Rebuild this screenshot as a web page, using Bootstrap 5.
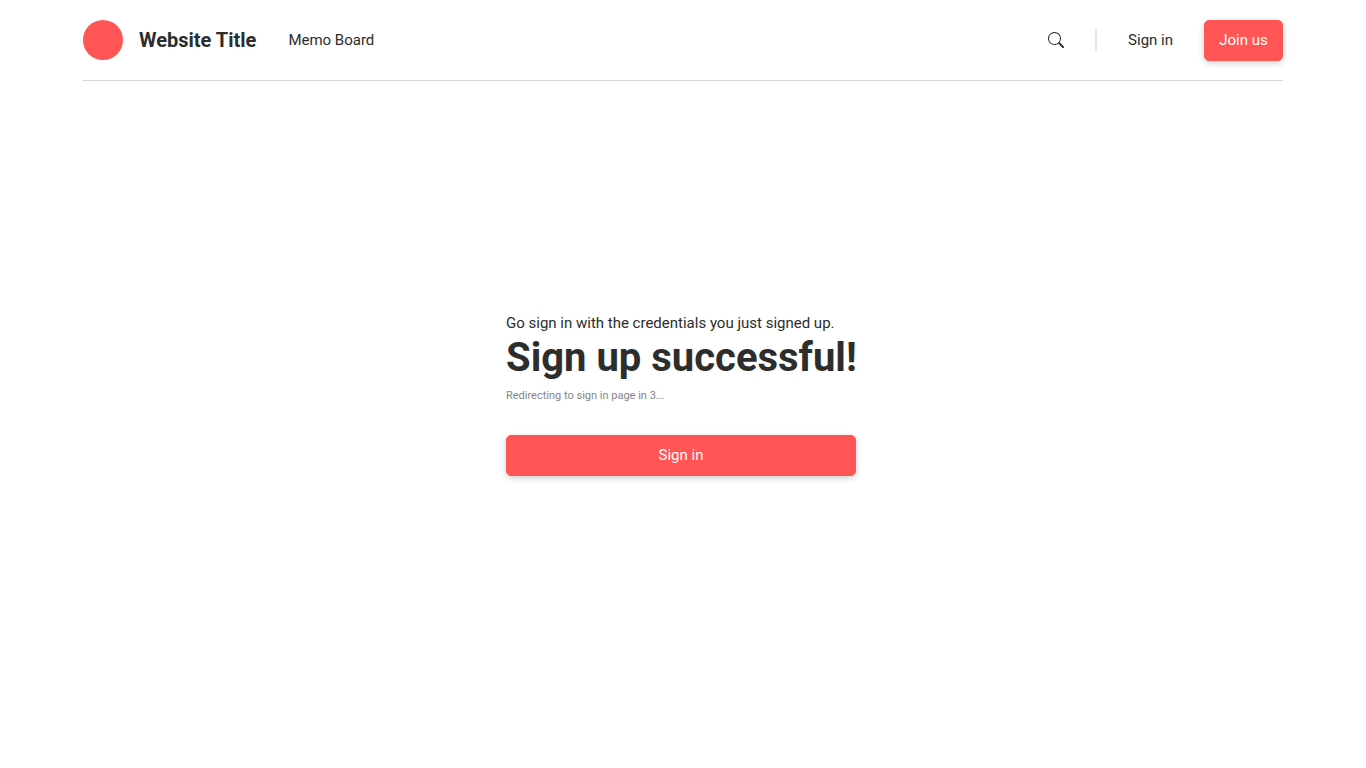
<!DOCTYPE html>
<html lang="en">
<head>
<meta charset="utf-8">
<meta name="viewport" content="width=device-width, initial-scale=1">
<title>Sign up successful</title>
<link href="https://cdn.jsdelivr.net/npm/bootstrap@5.3.0/dist/css/bootstrap.min.css" rel="stylesheet">
<style>
body{font-family:Roboto,"Liberation Sans",sans-serif;font-size:15px;line-height:24px;color:#2d2d2d;background:#fff}
.site-wrap{max-width:1200px}
.site-header{height:81px;border-bottom:1px solid #d6d6d6}
.site-logo{width:40px;height:40px;background:#ff5555}
.site-name{font-size:20px;font-weight:700}
.site-header a{color:#2d2d2d}
.site-nav{gap:31px}
.divider-bar{width:2px;height:24px;background:#e8e8e8}
.btn-coral{--bs-btn-font-size:15px;--bs-btn-color:#fff;--bs-btn-bg:#ff5555;--bs-btn-border-color:#ff5555;--bs-btn-hover-color:#fff;--bs-btn-hover-bg:#ee4848;--bs-btn-hover-border-color:#ee4848;height:41px;border-radius:5px;padding:0 14px;box-shadow:0 2px 6px rgba(0,0,0,.2)}
.btn-join{width:79px}
.headline{font-size:40px;font-weight:700;line-height:46px}
.redirect-note{font-size:11px;line-height:16px;color:#858585;margin:7px 0 31px}
.message-area{padding-bottom:63px}
.message-panel{width:354px;max-width:100%}
.message-action{width:350px;max-width:100%}
</style>
</head>
<body class="d-flex flex-column min-vh-100">
<div class="container-fluid site-wrap px-0">
<header class="site-header d-flex align-items-center">
<a href="#" class="d-flex align-items-center text-decoration-none"><span class="site-logo rounded-circle me-3"></span><span class="site-name">Website Title</span></a>
<a href="#" class="text-decoration-none ms-4 ps-2">Memo Board</a>
<nav class="site-nav d-flex align-items-center ms-auto">
<a href="#" class="d-flex" aria-label="Search"><svg width="16" height="16" fill="currentColor" viewBox="0 0 16 16"><path d="M11.742 10.344a6.500 6.500 0 1 0-1.397 1.398h-.001c.03.040.062.078.098.115l3.850 3.850a1 1 0 0 0 1.415-1.414l-3.850-3.850a1.007 1.007 0 0 0-.115-.1zM12 6.500a5.500 5.500 0 1 1-11 0 5.500 5.500 0 0 1 11 0z"/></svg></a>
<span class="divider-bar rounded"></span>
<a href="#" class="text-decoration-none">Sign in</a>
<button type="button" class="btn btn-coral btn-join">Join us</button>
</nav>
</header>
</div>
<main class="message-area flex-grow-1 d-flex flex-column align-items-center justify-content-center">
<div class="message-panel">
<p class="mb-0">Go sign in with the credentials you just signed up.</p>
<h1 class="headline mb-0">Sign up successful!</h1>
<p class="redirect-note">Redirecting to sign in page in 3...</p>
<button type="button" class="btn btn-coral message-action">Sign in</button>
</div>
</main>
<script src="https://cdn.jsdelivr.net/npm/bootstrap@5.3.0/dist/js/bootstrap.bundle.min.js"></script>
</body>
</html>
